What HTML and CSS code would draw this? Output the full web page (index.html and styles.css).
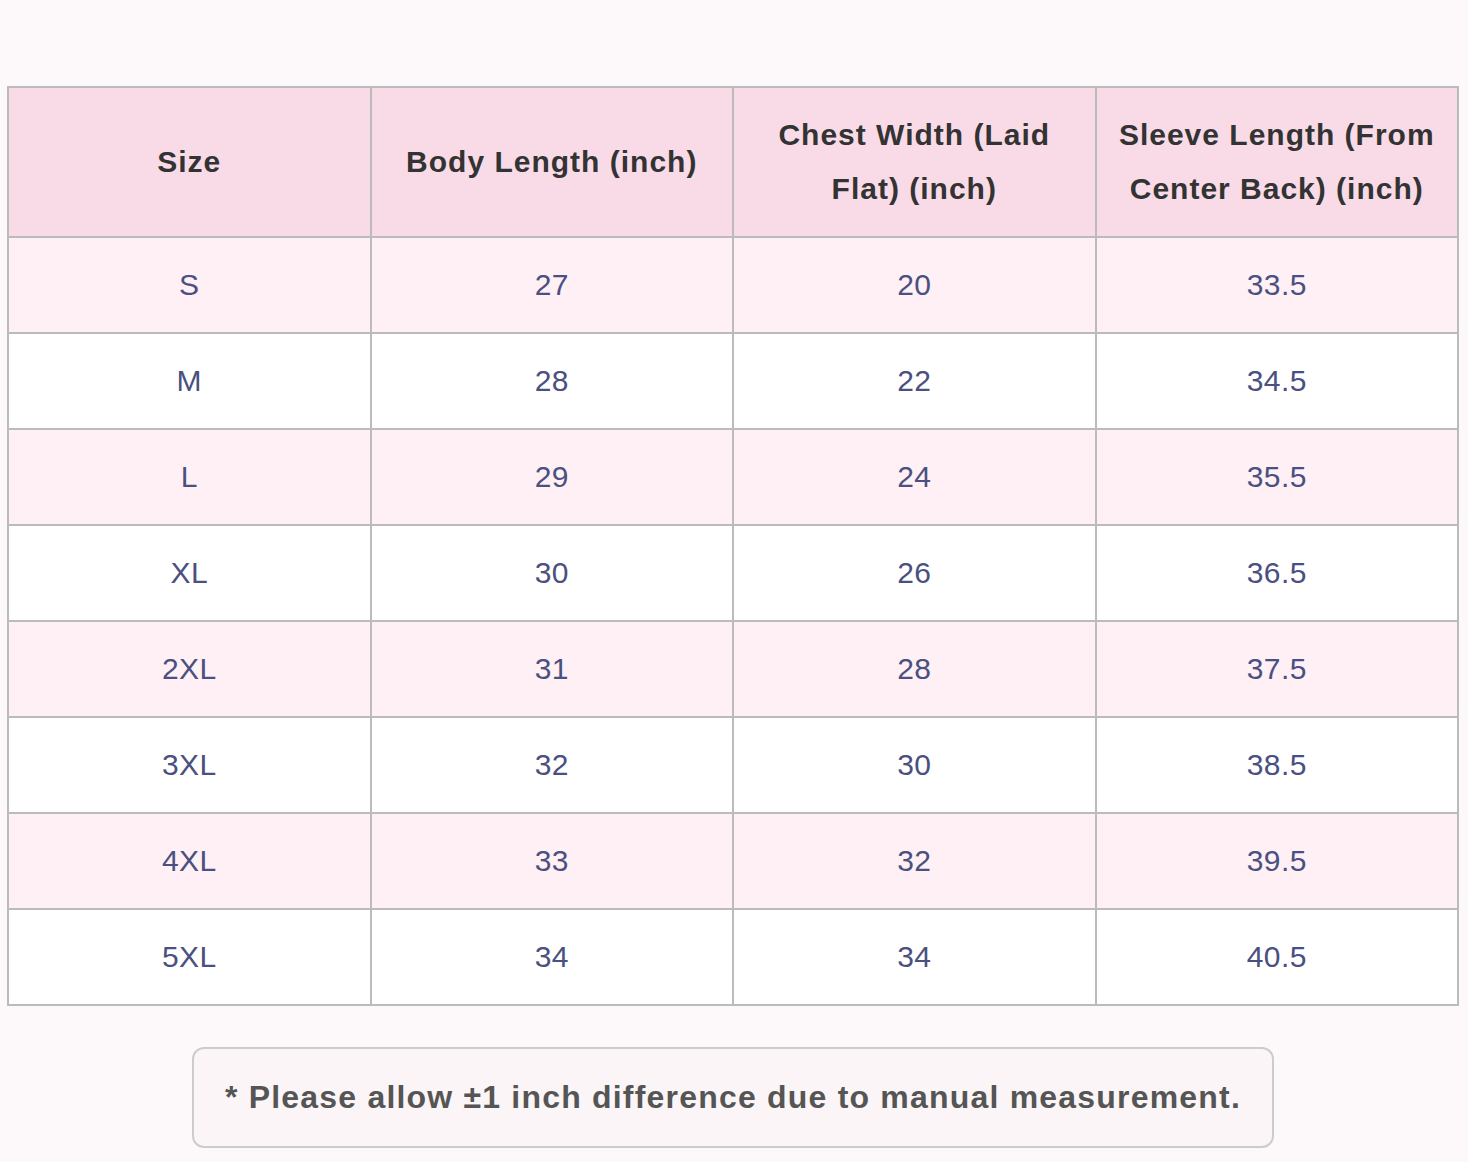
FILE: index.html
```html
<!DOCTYPE html>
<html lang="en">
<head>
<meta charset="utf-8">
<title>Size Chart</title>
<link rel="stylesheet" href="styles.css">
</head>
<body>
<div class="page">
  <table class="size-table">
    <thead>
      <tr>
        <th>Size</th>
        <th>Body Length (inch)</th>
        <th>Chest Width (Laid Flat) (inch)</th>
        <th>Sleeve Length (From Center Back) (inch)</th>
      </tr>
    </thead>
    <tbody>
      <tr><td>S</td><td>27</td><td>20</td><td>33.5</td></tr>
      <tr><td>M</td><td>28</td><td>22</td><td>34.5</td></tr>
      <tr><td>L</td><td>29</td><td>24</td><td>35.5</td></tr>
      <tr><td>XL</td><td>30</td><td>26</td><td>36.5</td></tr>
      <tr><td>2XL</td><td>31</td><td>28</td><td>37.5</td></tr>
      <tr><td>3XL</td><td>32</td><td>30</td><td>38.5</td></tr>
      <tr><td>4XL</td><td>33</td><td>32</td><td>39.5</td></tr>
      <tr><td>5XL</td><td>34</td><td>34</td><td>40.5</td></tr>
    </tbody>
  </table>
  <p class="note">* Please allow ±1 inch difference due to manual measurement.</p>
</div>
</body>
</html>
```

FILE: styles.css
```css
html, body {
  background: #fdf8f9;
}
body {
  margin: 0 9px 0 7px;
  font-family: "Liberation Sans", Arial, sans-serif;
}
.page {
  padding-top: 86px;
}
.size-table {
  width: 100%;
  border-collapse: collapse;
  table-layout: fixed;
  border: 2px solid #bbbbbb;
}
.size-table th,
.size-table td {
  border: 2px solid #bbbbbb;
  text-align: center;
  vertical-align: middle;
  padding: 20px 12px;
  line-height: 54px;
  font-size: 30px;
}
.size-table th {
  background: #f9dbe8;
  color: #333333;
  font-weight: bold;
  letter-spacing: 1px;
}
.size-table td {
  color: #4a5080;
  letter-spacing: 0.4px;
  background: #ffffff;
}
.size-table tbody tr:nth-child(odd) td {
  background: #fff0f5;
}
.note {
  display: table;
  margin: 41px auto 0;
  padding: 26px 31px;
  border: 2px solid #cccccc;
  border-radius: 12px;
  background: #fbf5f7;
  color: #555555;
  font-size: 32px;
  font-weight: bold;
  letter-spacing: 1.2px;
  line-height: 45px;
}
```
